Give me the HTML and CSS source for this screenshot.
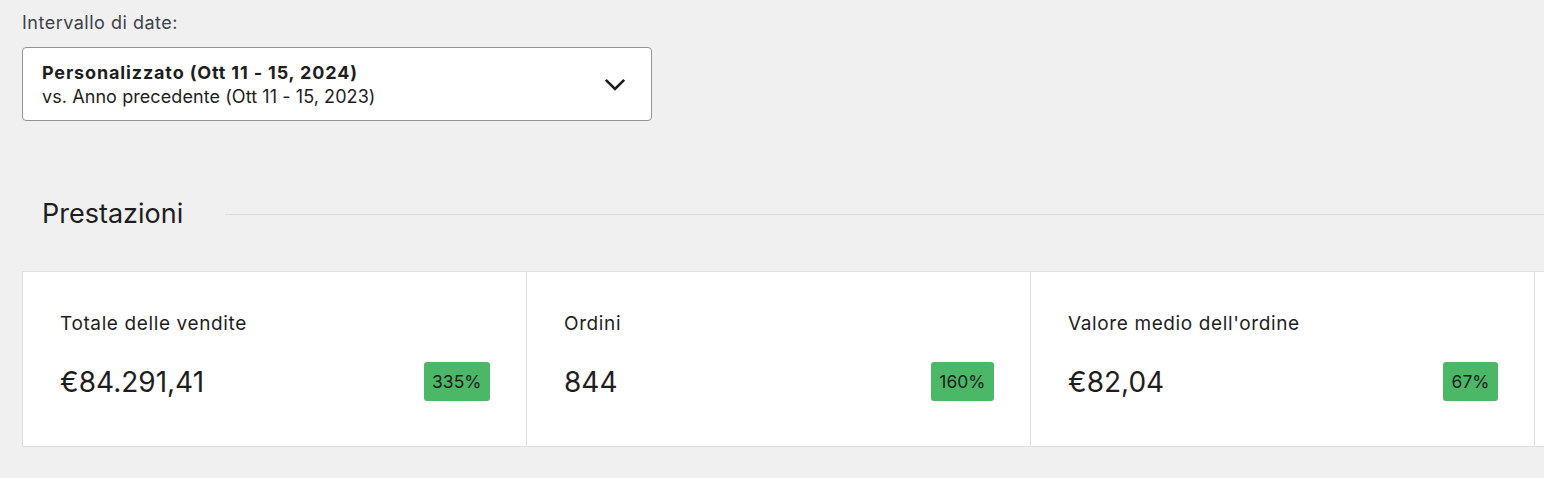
FILE: index.html
```html
<!DOCTYPE html>
<html>

<head>
    <title>Analisi - Panoramica</title>
    <meta name="viewport" content="width=device-width,initial-scale=1" />
    <link rel="stylesheet" href="styles.css">
</head>

<body>
    <div class="filters">
        <label class="filter-label" for="date-range">Intervallo di date:</label>
        <button class="date-picker" id="date-range" type="button">
            <span class="date-text">
                <strong>Personalizzato (Ott 11 - 15, 2024)</strong>
                <span>vs. Anno precedente (Ott 11 - 15, 2023)</span>
            </span>
            <svg class="chevron" width="22" height="14" viewBox="0 0 22 14" aria-hidden="true">
                <polyline points="1.8,1.8 11,11 20.2,1.8" />
            </svg>
        </button>
    </div>

    <div class="section-header">
        <h2>Prestazioni</h2>
        <span class="divider"></span>
    </div>

    <ul class="summary">
        <li class="summary-item">
            <div class="item-label">Totale delle vendite</div>
            <div class="item-data">
                <span class="item-value">€84.291,41</span>
                <span class="delta">335%</span>
            </div>
        </li>
        <li class="summary-item">
            <div class="item-label">Ordini</div>
            <div class="item-data">
                <span class="item-value">844</span>
                <span class="delta">160%</span>
            </div>
        </li>
        <li class="summary-item">
            <div class="item-label">Valore medio dell'ordine</div>
            <div class="item-data">
                <span class="item-value">€82,04</span>
                <span class="delta">67%</span>
            </div>
        </li>
        <!-- next tile is scrolled out of view -->
        <li class="summary-item"></li>
    </ul>
</body>

</html>
```

FILE: styles.css
```css
* {
    box-sizing: border-box;
}

body {
    margin: 0;
    background: #f0f0f0;
    font-family: Inter, "Noto Sans", sans-serif;
    color: #1e1e1e;
    overflow: hidden;
}

.filters {
    padding: 12px 22px 0;
}

.filter-label {
    display: block;
    font-size: 18px;
    line-height: 22px;
    letter-spacing: 0.5px;
    color: #3c434a;
    margin-bottom: 13px;
}

.date-picker {
    display: flex;
    align-items: center;
    justify-content: space-between;
    width: 630px;
    height: 74px;
    padding: 0 25px 0 19px;
    background: #fff;
    border: 1px solid #949494;
    border-radius: 4px;
    font-family: inherit;
    color: #1e1e1e;
    text-align: left;
}

.date-text {
    display: flex;
    flex-direction: column;
    font-size: 18px;
    line-height: 24px;
    letter-spacing: 0.08px;
    padding-top: 1px;
}

.date-text strong {
    font-weight: 700;
    letter-spacing: 0.85px;
}

.chevron {
    fill: none;
    stroke: #1e1e1e;
    stroke-width: 2.6;
    margin-top: 2px;
}

.section-header {
    display: flex;
    align-items: center;
    margin: 77px 0 0 22px;
}

.section-header h2 {
    margin: 0;
    padding: 0 20px;
    font-size: 27px;
    font-weight: 400;
    line-height: 32px;
}

.divider {
    flex: 1;
    height: 1px;
    margin-left: 22px;
    background: #dcdcde;
}

.summary {
    display: grid;
    grid-template-columns: repeat(4, 504px);
    width: max-content;
    margin: 41px 0 0 22px;
    padding: 0;
    list-style: none;
    background: #fff;
    border-top: 1px solid #e0e0e0;
    border-bottom: 1px solid #e0e0e0;
    border-left: 1px solid #e0e0e0;
}

.summary-item {
    height: 174px;
    padding: 40px 36px 0 37px;
    border-right: 1px solid #e0e0e0;
}

.item-label {
    font-size: 19px;
    line-height: 24px;
    letter-spacing: 0.62px;
}

.item-data {
    display: flex;
    align-items: center;
    justify-content: space-between;
    margin-top: 26px;
}

.item-value {
    font-size: 28px;
    line-height: 36px;
}

.delta {
    padding: 0 8.5px;
    height: 39px;
    line-height: 39px;
    font-size: 17.5px;
    background: #4ab866;
    border-radius: 3px;
}
```
